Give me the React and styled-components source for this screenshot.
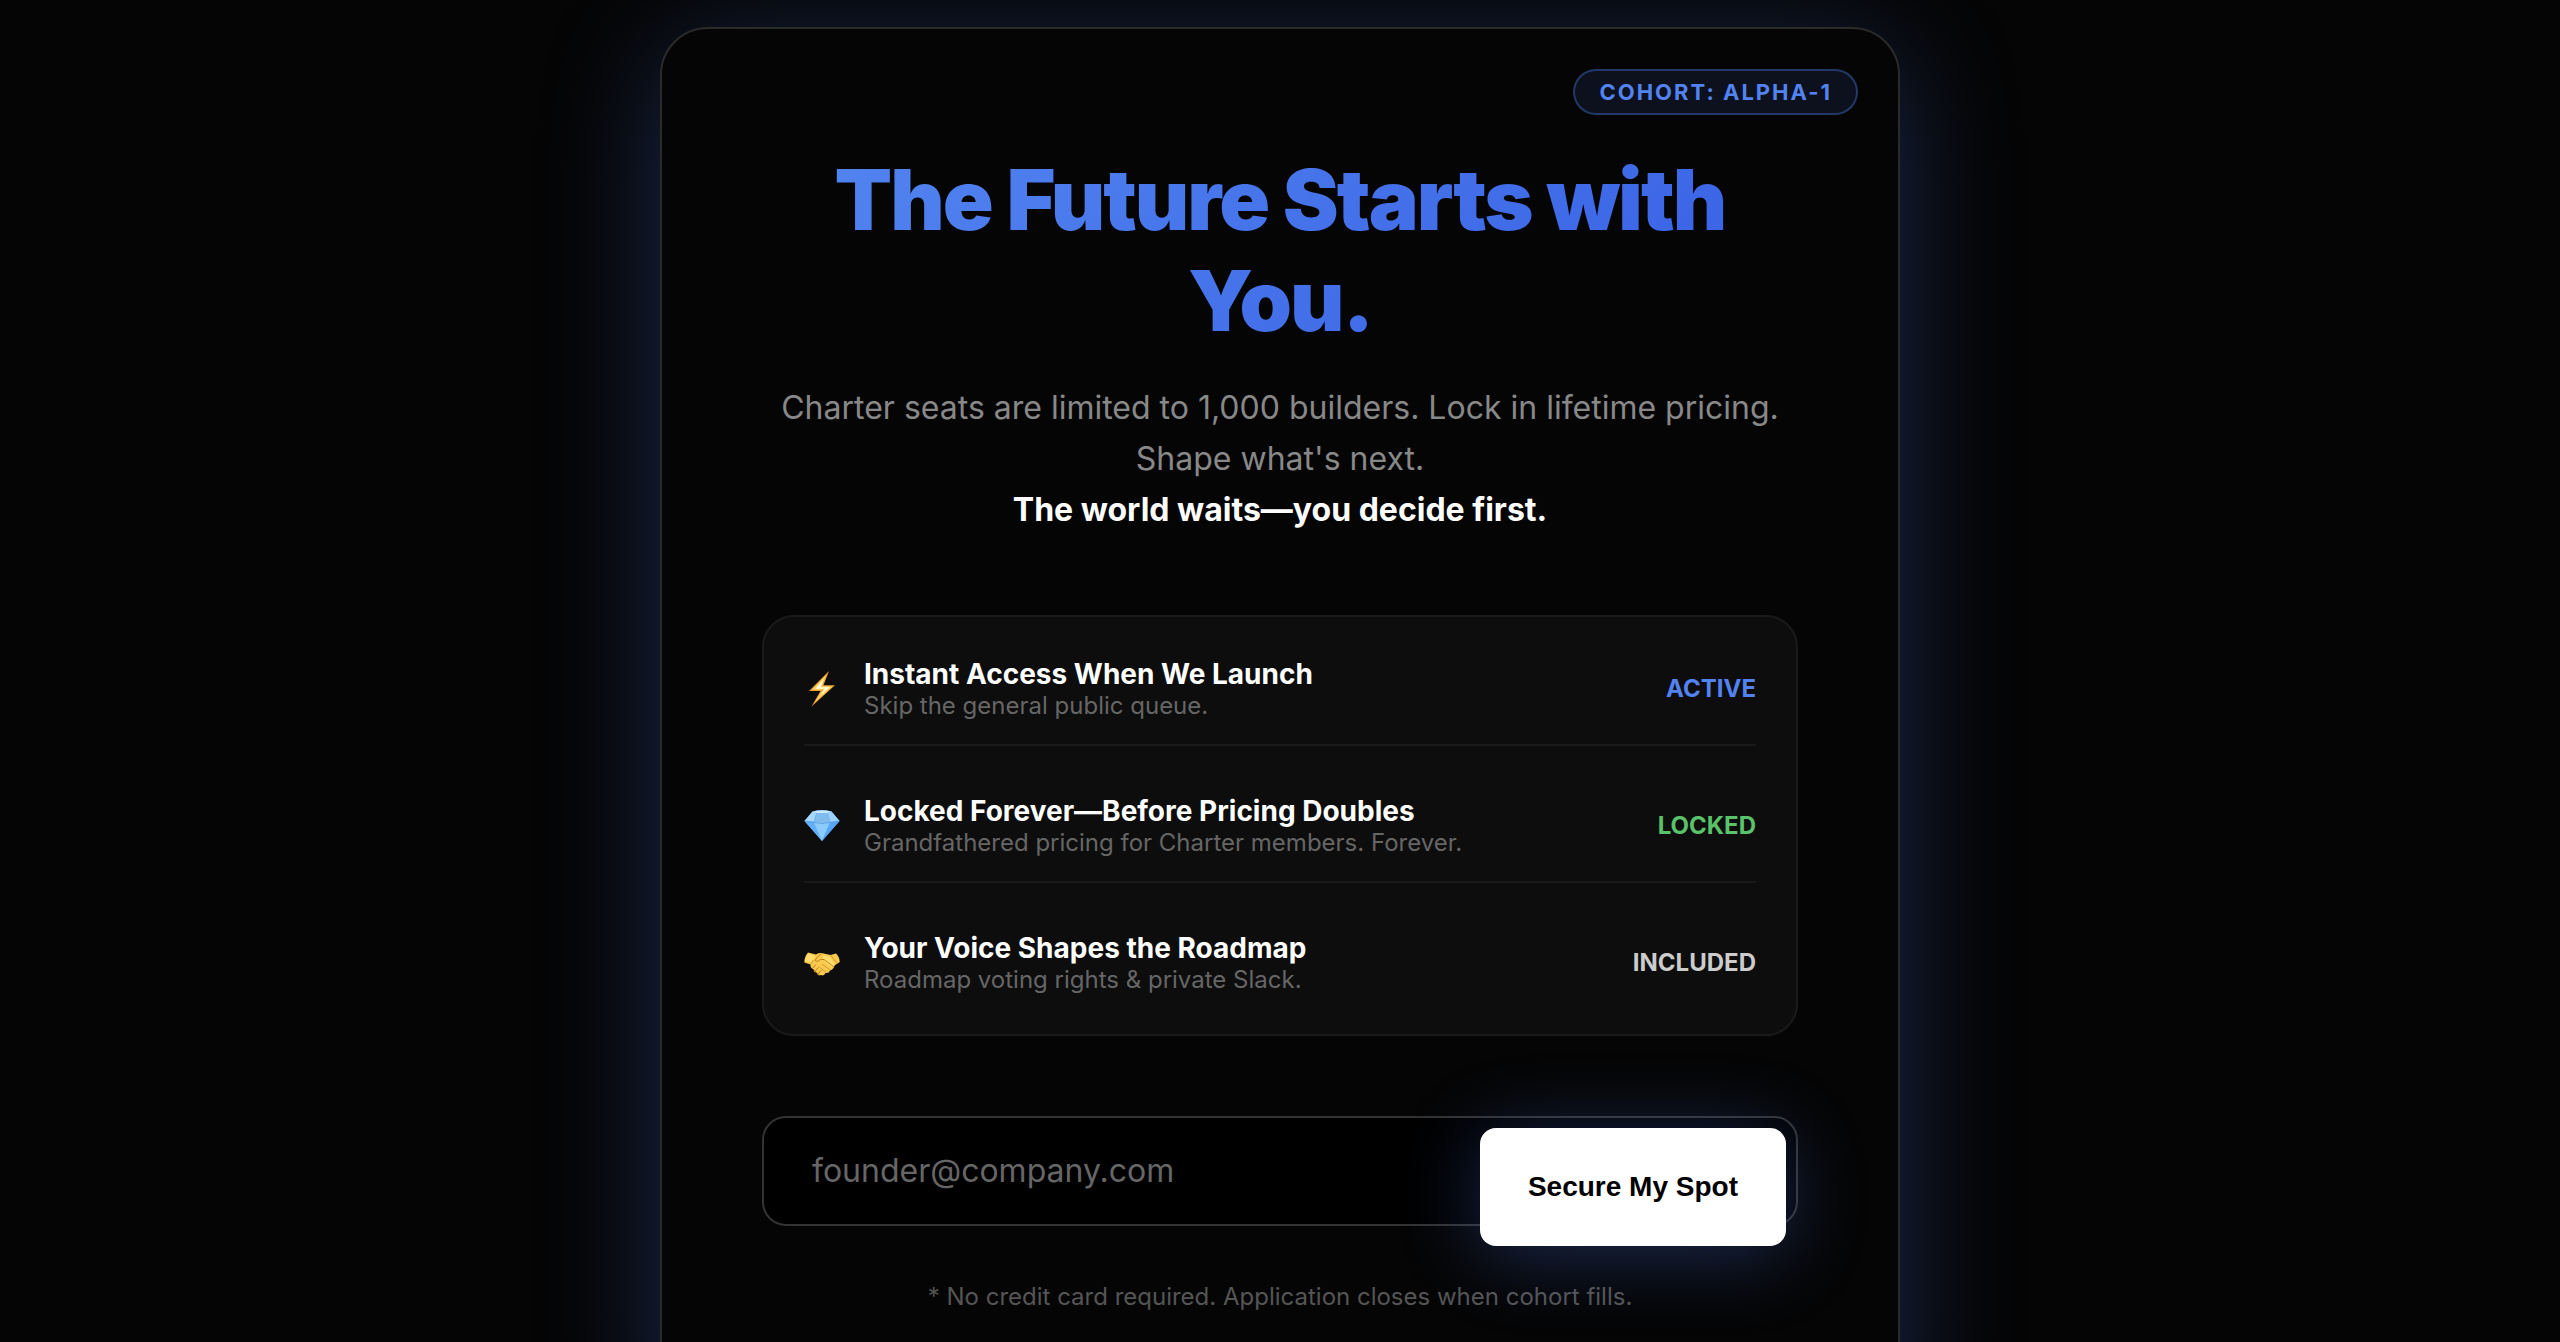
import React, { useState } from "react";
import styled, { createGlobalStyle } from "styled-components";

const GlobalStyle = createGlobalStyle`
  *, *::before, *::after { box-sizing: border-box; }
  html { background: #050505; scrollbar-width: none; }
  body {
    margin: 0;
    color: #fff;
    font-family: Inter, "Liberation Sans", sans-serif;
    -webkit-font-smoothing: antialiased;
  }
`;

const Page = styled.main`
  display: flex;
  justify-content: center;
  padding: 27px 40px 40px;
`;

const Card = styled.section`
  position: relative;
  width: 100%;
  max-width: 1240px;
  padding: 120px 100px;
  border: 2px solid #2a2a2a;
  border-radius: 48px;
  background: #050505;
  box-shadow: 0 20px 120px rgba(79, 125, 245, 0.3);
  text-align: center;
`;

const Badge = styled.div`
  position: absolute;
  top: 40px;
  right: 40px;
  padding: 8px 24px;
  border: 2px solid rgba(79, 131, 241, 0.35);
  border-radius: 40px;
  background: rgba(79, 131, 241, 0.1);
  color: #5383f1;
  font-size: 22px;
  font-weight: 700;
  line-height: 26px;
  letter-spacing: 2px;
`;

const Title = styled.h1`
  margin: 0 0 31px;
  background: linear-gradient(135deg, #5386f0, #375fe4);
  background-clip: text;
  -webkit-background-clip: text;
  color: transparent;
  font-size: 84px;
  font-weight: 900;
  line-height: 101px;
  letter-spacing: -2px;
`;

const Lead = styled.p`
  margin: 0 0 80px;
  color: #888;
  font-size: 32px;
  line-height: 51px;
`;

const Strong = styled.strong`
  display: block;
  color: #fff;
  font-weight: 700;
`;

const Perks = styled.ul`
  display: flex;
  flex-direction: column;
  gap: 48px;
  margin: 0 0 80px;
  padding: 40px;
  border: 2px solid #1a1a1a;
  border-radius: 32px;
  background: #0d0d0d;
  list-style: none;
  text-align: left;
`;

const Perk = styled.li`
  display: flex;
  align-items: center;
  gap: 24px;

  &:not(:last-child) {
    padding-bottom: 24px;
    border-bottom: 2px solid #1a1a1a;
  }
`;

const PerkIcon = styled.svg`
  flex: none;
  width: 36px;
  height: 36px;
`;

const PerkText = styled.div`
  flex: 1;
`;

const PerkTitle = styled.h2`
  margin: 0;
  font-size: 28px;
  font-weight: 700;
  line-height: 34px;
`;

const PerkNote = styled.p`
  margin: 0;
  color: #666;
  font-size: 24px;
  line-height: 29px;
`;

const Status = styled.span`
  color: ${(p) => p.$color};
  font-size: 24px;
  font-weight: 700;
  line-height: 29px;
`;

const Form = styled.form`
  position: relative;
  margin-bottom: 24px;
  padding-bottom: 32px;
`;

const Email = styled.input`
  display: block;
  width: 100%;
  padding: 33px 48px;
  border: 2px solid #333;
  border-radius: 24px;
  background: #000;
  color: #fff;
  font-family: inherit;
  font-size: 32px;
  line-height: 40px;
  outline: none;

  &::placeholder { color: #666; opacity: 1; }
`;

const Submit = styled.button`
  position: absolute;
  top: 12px;
  right: 12px;
  bottom: 12px;
  padding: 0 48px;
  border: 0;
  border-radius: 16px;
  background: #fff;
  box-shadow: 0 8px 80px rgba(79, 125, 245, 0.32);
  color: #000;
  font-family: "Liberation Sans", Arial, sans-serif;
  font-size: 28px;
  font-weight: 700;
  cursor: pointer;
`;

const FinePrint = styled.p`
  margin: 0;
  color: #555;
  font-size: 24px;
  line-height: 29px;
`;

function BoltIcon() {
  return (
    <PerkIcon viewBox="0 0 36 36" aria-hidden="true">
      <path d="M25 0 5 20H16.500L7.500 35.500 31 14.300H19.500Z" fill="#eda030" />
      <path d="M22.500 3.500 8 18.800H19L10.500 31.500 28.500 15.300H17.500Z" fill="#ffd766" />
      <path d="M20 8 11.500 17.800H21L16 24.500 25.500 16.300H16.500Z" fill="#fffbe0" />
    </PerkIcon>
  );
}

function GemIcon() {
  return (
    <PerkIcon viewBox="0 0 36 36" aria-hidden="true">
      <path d="M8.500 3.500Q18 1 27.500 3.500L35.500 13 18 33 .5 13Z" fill="#61b2fa" />
      <path d="M8.500 3.500 12.500 5 10 13.500.5 13Z" fill="#a5d8fd" />
      <path d="M8.500 3.500Q18 1 27.500 3.500L23.500 5H12.500Z" fill="#c8e8fe" />
      <path d="M12.500 5H23.500L26 14.500 18 15.500 10 14.500Z" fill="#82bcee" />
      <path d="M27.500 3.500 35.500 13 26 14.500 23.500 5Z" fill="#9bd0fc" />
      <path d="M.5 13 10 14.500 18 33Z" fill="#62b0fc" />
      <path d="M10 14.500 18 15.500 26 14.500 18 33Z" fill="#8bccfd" />
      <path d="M26 14.500 35.500 13 18 33Z" fill="#56a6f8" />
      <path d="M.5 13 10 14.500 18 15.500 26 14.500 35.500 13" fill="none" stroke="#4d91dc" strokeWidth=".6" />
      <path d="M12.500 5 10 14.500M23.500 5 26 14.500" stroke="#66a4e0" strokeWidth=".5" />
    </PerkIcon>
  );
}

function HandshakeIcon() {
  return (
    <PerkIcon viewBox="0 0 36 36" aria-hidden="true">
      <path d="M4 7.500 12 9.500Q15 7.500 18.500 8.200L26.500 10 32 8.500Q35.500 11.500 35.800 17L30.500 20.500Q30 24 26 25.500 25 28.500 21.500 28 20 31.500 17 30 13.500 31 12.500 27.500 9.500 27.500 9.800 24.500 6 23 6.500 19.500L.3 17.500Q.5 11.500 4 7.500Z" fill="#f8c94c" />
      <path d="M4.500 8.500 11.500 11 7.500 17.500 1 16Q1.500 11.500 4.500 8.500Z" fill="#ffdc6c" />
      <path d="M19 10 26 12 31 20Q28 22 27 22L19 15Z" fill="#ffdc6c" />
      <path d="M17 9.200Q13 11 11 15.500 13 18 16.500 14.500L20 14.500 29.500 21.500" fill="none" stroke="#c18425" strokeWidth="1" strokeLinecap="round" />
      <path d="M18.500 19.500 25.500 24.500M16 22.500 21.500 27M26.500 10 33 18.500M6.500 19.500 9 15.500" fill="none" stroke="#c98d2b" strokeWidth=".8" strokeLinecap="round" />
      <path d="M8.500 23.500 11.500 20M11 26.500 14.500 22.500M14 29 17 25.500M10 25 12.500 27.500M13 28 15.500 30" fill="none" stroke="#b9781f" strokeWidth=".9" strokeLinecap="round" />
    </PerkIcon>
  );
}

const perks = [
  { icon: BoltIcon, title: "Instant Access When We Launch", note: "Skip the general public queue.", status: "ACTIVE", color: "#5383f1" },
  { icon: GemIcon, title: "Locked Forever—Before Pricing Doubles", note: "Grandfathered pricing for Charter members. Forever.", status: "LOCKED", color: "#5ac26a" },
  { icon: HandshakeIcon, title: "Your Voice Shapes the Roadmap", note: "Roadmap voting rights & private Slack.", status: "INCLUDED", color: "#ccc" },
];

export default function App() {
  const [email, setEmail] = useState("");

  return (
    <>
      <GlobalStyle />
      <Page>
        <Card>
          <Badge>COHORT: ALPHA-1</Badge>
          <Title>The Future Starts with You.</Title>
          <Lead>
            Charter seats are limited to 1,000 builders. Lock in lifetime pricing. Shape what's next.
            <Strong>The world waits—you decide first.</Strong>
          </Lead>
          <Perks>
            {perks.map(({ icon: Icon, title, note, status, color }) => (
              <Perk key={title}>
                <Icon />
                <PerkText>
                  <PerkTitle>{title}</PerkTitle>
                  <PerkNote>{note}</PerkNote>
                </PerkText>
                <Status $color={color}>{status}</Status>
              </Perk>
            ))}
          </Perks>
          <Form onSubmit={(e) => e.preventDefault()}>
            <Email
              type="email"
              aria-label="Email address"
              placeholder="founder@company.com"
              value={email}
              onChange={(e) => setEmail(e.target.value)}
            />
            <Submit type="submit">Secure My Spot</Submit>
          </Form>
          <FinePrint>* No credit card required. Application closes when cohort fills.</FinePrint>
        </Card>
      </Page>
    </>
  );
}
